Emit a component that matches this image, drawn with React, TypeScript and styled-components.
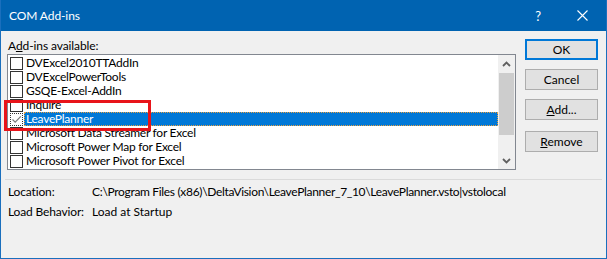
import React from "react";
import styled, { createGlobalStyle } from "styled-components";

const GlobalStyle = createGlobalStyle`
  * { box-sizing: border-box; }
  html, body { margin: 0; padding: 0; background: #f0f0f0; }
  body {
    font-family: Lato, "Noto Sans", sans-serif;
    font-size: 12px;
    color: #000;
  }
`;

const addins = [
  { name: "DVExcel2010TTAddIn", checked: false },
  { name: "DVExcelPowerTools", checked: false },
  { name: "GSQE-Excel-AddIn", checked: false },
  { name: "Inquire", checked: false },
  { name: "LeavePlanner", checked: true },
  { name: "Microsoft Data Streamer for Excel", checked: false },
  { name: "Microsoft Power Map for Excel", checked: false },
  { name: "Microsoft Power Pivot for Excel", checked: false },
];

const App = () => {
  const selected = 4;
  return (
    <>
      <GlobalStyle />
      <Window>
        <TitleBar>
          <Title>COM Add-ins</Title>
          <TitleButtons>
            <HelpGlyph>?</HelpGlyph>
            <svg width="11" height="11" viewBox="0 0 11 11">
              <path d="M0.5 0.5 L10.5 10.5 M10.5 0.5 L0.5 10.5" stroke="#fff" strokeWidth="1.1" />
            </svg>
          </TitleButtons>
        </TitleBar>
        <Body>
          <Main>
            <LeftCol>
              <Label>
                A<u>d</u>d-ins available:
              </Label>
              <ListBox>
                <Rows>
                  {addins.map((a, i) => (
                    <Row key={a.name}>
                      <CheckBox $focus={i === selected}>
                        {a.checked && (
                          <svg width="11" height="11" viewBox="0 0 11 11">
                            <path d="M1.5 5.5 L4.2 8.2 L9.8 2.4" fill="none" stroke="#7a7a7a" strokeWidth="1.2" />
                          </svg>
                        )}
                      </CheckBox>
                      <RowText $selected={i === selected}>{a.name}</RowText>
                    </Row>
                  ))}
                </Rows>
                <ScrollBar>
                  <ArrowBox>
                    <svg width="9" height="6" viewBox="0 0 9 6">
                      <path d="M1 5 L4.5 1.5 L8 5" fill="none" stroke="#606060" strokeWidth="1.8" />
                    </svg>
                  </ArrowBox>
                  <Track>
                    <Thumb />
                  </Track>
                  <ArrowBox>
                    <svg width="9" height="6" viewBox="0 0 9 6">
                      <path d="M1 1 L4.5 4.5 L8 1" fill="none" stroke="#606060" strokeWidth="1.8" />
                    </svg>
                  </ArrowBox>
                </ScrollBar>
                <Highlight />
              </ListBox>
            </LeftCol>
            <ButtonCol>
              <Button $primary>OK</Button>
              <Button>Cancel</Button>
              <Button $gap={11}>
                <u>A</u>dd...
              </Button>
              <Button>
                <u>R</u>emove
              </Button>
            </ButtonCol>
          </Main>
          <Separator />
          <InfoRow>
            <InfoKey>Location:</InfoKey>
            <InfoValue $narrow>C:\Program Files (x86)\DeltaVision\LeavePlanner_7_10\LeavePlanner.vsto|vstolocal</InfoValue>
          </InfoRow>
          <InfoRow>
            <InfoKey>Load Behavior:</InfoKey>
            <InfoValue>Load at Startup</InfoValue>
          </InfoRow>
        </Body>
      </Window>
    </>
  );
};

const Window = styled.div`
  width: 607px;
  height: 259px;
  border: 1px solid #1a6fbd;
  border-top: none;
  display: flex;
  flex-direction: column;
  background: #f0f0f0;
`;

const TitleBar = styled.div`
  height: 31px;
  background: #0063b1;
  color: #fff;
  display: flex;
  align-items: center;
  justify-content: space-between;
  padding: 0 18px 0 8px;
`;

const Title = styled.div`
  font-size: 12px;
  line-height: 16px;
  letter-spacing: -0.1px;
`;

const TitleButtons = styled.div`
  display: flex;
  align-items: center;
  gap: 36px;
`;

const HelpGlyph = styled.span`
  font-size: 13px;
  line-height: 16px;
`;

const Body = styled.div`
  flex: 1;
  padding: 7px 7px 0 6px;
  display: flex;
  flex-direction: column;
`;

const Main = styled.div`
  display: flex;
  gap: 9px;
`;

const LeftCol = styled.div`
  width: 509px;
  display: flex;
  flex-direction: column;
`;

const Label = styled.div`
  line-height: 16px;
  padding-left: 1px;
  letter-spacing: -0.1px;
`;

const ListBox = styled.div`
  position: relative;
  height: 116px;
  border: 1px solid #828790;
  background: #fff;
  display: flex;
`;

const Rows = styled.div`
  flex: 1;
  padding-top: 1px;
  display: flex;
  flex-direction: column;
`;

const Row = styled.div`
  height: 14px;
  display: flex;
  align-items: center;
`;

const CheckBox = styled.div<{ $focus?: boolean }>`
  width: 13px;
  height: 13px;
  margin-left: 2px;
  margin-right: 1px;
  border: 1px ${(p) => (p.$focus ? "dotted" : "solid")} #333;
  background: #fff;
  display: flex;
  align-items: center;
  justify-content: center;
`;

const RowText = styled.div<{ $selected?: boolean }>`
  flex: 1;
  height: 14px;
  line-height: 14px;
  padding-left: 2px;
  white-space: nowrap;
  letter-spacing: -0.25px;
  background: ${(p) => (p.$selected ? "#0078d7" : "transparent")};
  color: ${(p) => (p.$selected ? "#fff" : "#000")};
  outline: ${(p) => (p.$selected ? "1px dotted #e8a040" : "none")};
  outline-offset: -1px;
`;

const ScrollBar = styled.div`
  width: 17px;
  background: #f0f0f0;
  display: flex;
  flex-direction: column;
`;

const ArrowBox = styled.div`
  height: 17px;
  display: flex;
  align-items: center;
  justify-content: center;
`;

const Track = styled.div`
  flex: 1;
  padding: 1px 1px 0 1px;
`;

const Thumb = styled.div`
  height: 62px;
  background: #cdcdcd;
`;

const Highlight = styled.div`
  position: absolute;
  left: -4px;
  top: 45px;
  width: 147px;
  height: 31px;
  border: 3px solid #e8141a;
  pointer-events: none;
`;

const ButtonCol = styled.div`
  padding-top: 1px;
  display: flex;
  flex-direction: column;
`;

const Button = styled.button<{ $primary?: boolean; $gap?: number }>`
  width: 73px;
  height: 21px;
  margin-bottom: ${(p) => p.$gap ?? 9}px;
  font-family: Lato, "Noto Sans", sans-serif;
  font-size: 12px;
  line-height: 14px;
  padding: 0;
  color: #000;
  background: #e1e1e1;
  border: ${(p) => (p.$primary ? "2px solid #0078d7" : "1px solid #adadad")};
`;

const Separator = styled.div`
  height: 1px;
  background: #dadada;
  margin: 9px -3px 0 -2px;
`;

const InfoRow = styled.div`
  display: flex;
  line-height: 16px;
  margin-top: 4px;
  padding-left: 1px;
`;

const InfoKey = styled.div`
  width: 84px;
  white-space: nowrap;
  letter-spacing: -0.15px;
`;

const InfoValue = styled.div<{ $narrow?: boolean }>`
  white-space: nowrap;
  letter-spacing: ${(p) => (p.$narrow ? "-0.32px" : "0")};
`;

export default App;
